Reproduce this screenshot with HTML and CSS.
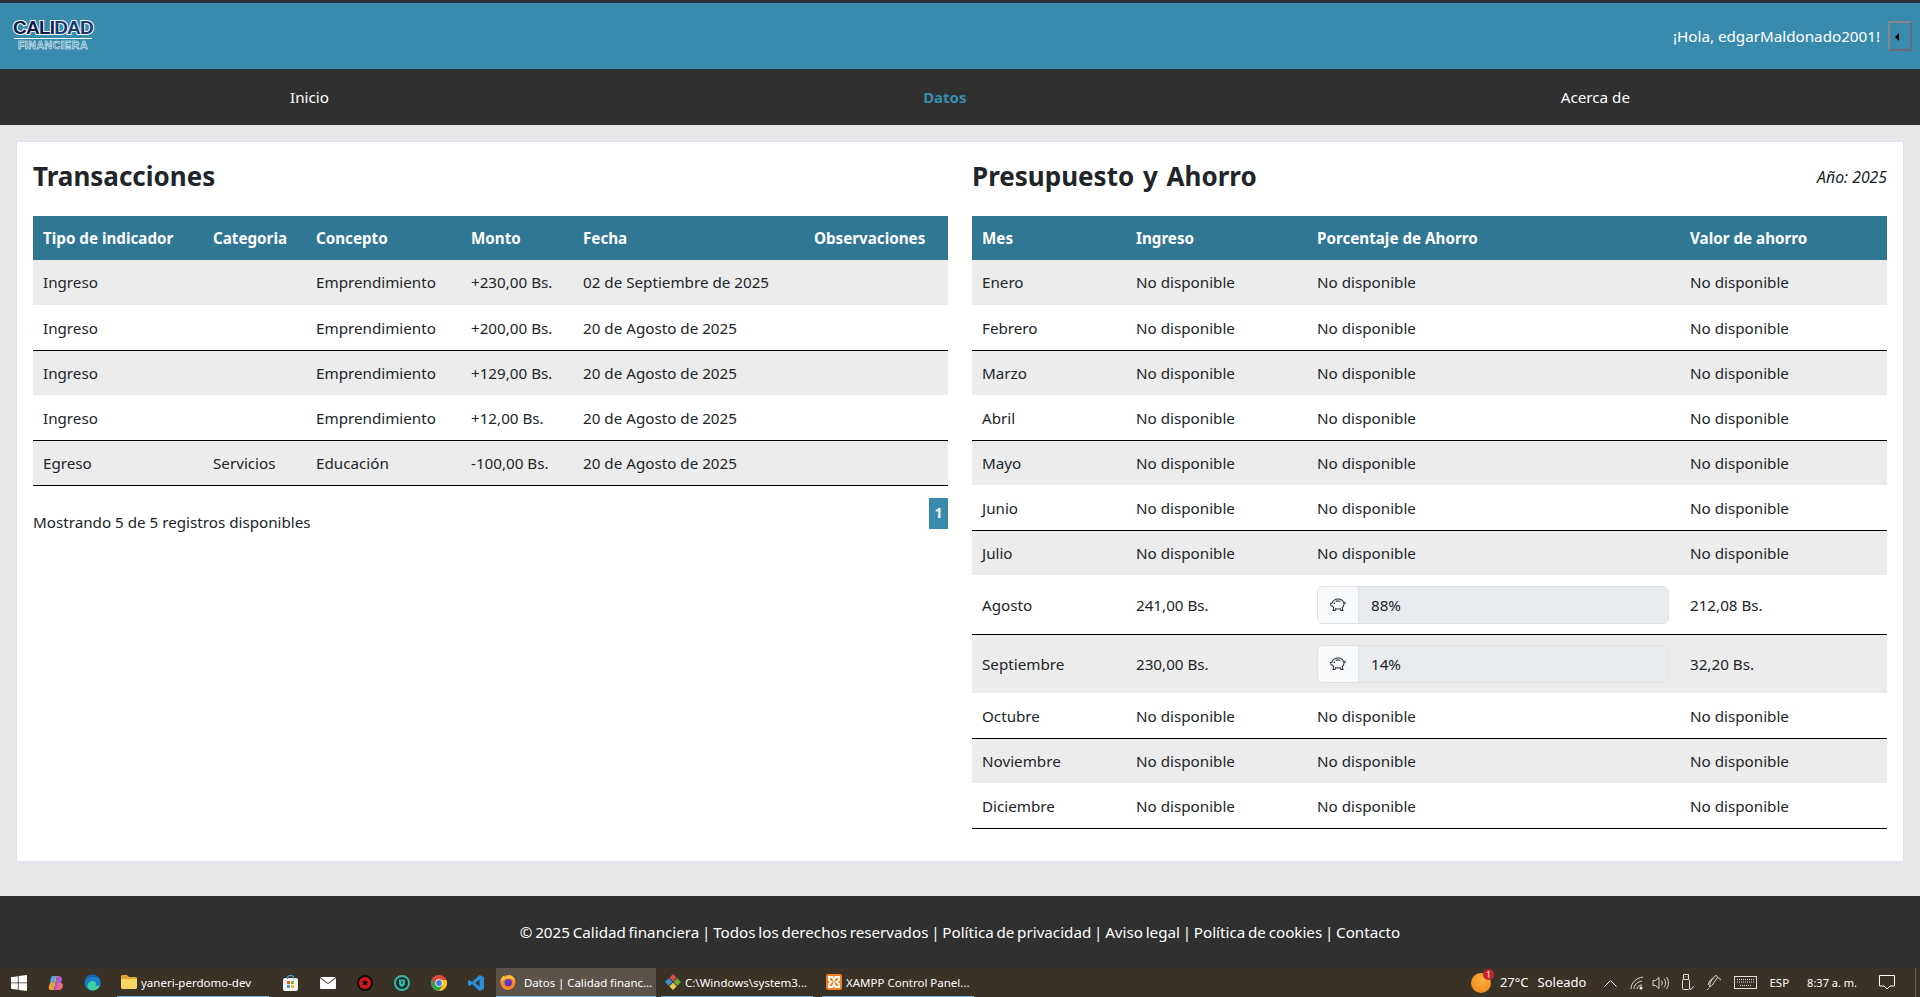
FILE: index.html
```html
<!DOCTYPE html>
<html lang="es">
<head>
<meta charset="utf-8">
<title>Datos | Calidad financiera</title>
<link rel="stylesheet" href="styles.css">
</head>
<body>
<svg class="defs" width="0" height="0" aria-hidden="true">
  <symbol id="piggy" viewBox="0 0 16 16">
    <path d="M5 6.25a.75.75 0 1 1-1.5 0 .75.75 0 0 1 1.5 0zm1.138-1.496A6.613 6.613 0 0 1 7.964 4.5c.666 0 1.303.097 1.893.273a.5.5 0 0 0 .286-.958A7.602 7.602 0 0 0 7.964 3.5c-.734 0-1.441.103-2.102.292a.5.5 0 1 0 .276.962z"/>
    <path fill-rule="evenodd" d="M7.964 1.527c-2.977 0-5.571 1.704-6.32 4.125h-.55A1 1 0 0 0 .11 6.824l.254 1.46a1.5 1.5 0 0 0 1.478 1.243h.263c.3.513.688.978 1.145 1.382l-.729 2.477a.5.5 0 0 0 .48.641h2a.5.5 0 0 0 .471-.332l.482-1.351c.635.173 1.31.267 2.011.267.707 0 1.388-.095 2.028-.272l.543 1.372a.5.5 0 0 0 .465.316h2a.5.5 0 0 0 .478-.645l-.761-2.506C13.81 9.895 14.5 8.559 14.5 7.069c0-.145-.007-.29-.02-.431.261-.11.508-.266.705-.444.315.306.815.306.815-.417 0 .223-.5.223-.461-.026a.95.95 0 0 0 .09-.255.7.7 0 0 0-.202-.645.58.58 0 0 0-.707-.098.735.735 0 0 0-.375.562c-.024.243.082.48.32.654a2.112 2.112 0 0 1-.259.153c-.534-2.664-3.284-4.595-6.442-4.595zM2.516 6.26c.455-2.066 2.667-3.733 5.448-3.733 3.146 0 5.536 2.114 5.536 4.542 0 1.254-.624 2.41-1.67 3.248a.5.5 0 0 0-.165.535l.66 2.175h-.985l-.59-1.487a.5.5 0 0 0-.629-.288c-.661.23-1.39.359-2.157.359a6.558 6.558 0 0 1-2.176-.367.5.5 0 0 0-.635.304l-.525 1.471h-.979l.633-2.15a.5.5 0 0 0-.17-.534 4.649 4.649 0 0 1-1.284-1.541.5.5 0 0 0-.446-.275h-.56a.5.5 0 0 1-.492-.414l-.254-1.46h.933a.5.5 0 0 0 .488-.393z"/>
  </symbol>
</svg>

<div class="topline"></div>
<header class="header">
  <a class="logo" href="#">
    <span class="logo-main"><span class="logo-cali">CALI</span><span class="logo-dad">DAD</span></span>
    <span class="logo-rule"></span>
    <span class="logo-sub">FINANCIERA</span>
  </a>
  <div class="user">
    <span class="user-name">¡Hola, edgarMaldonado2001!</span>
    <button class="user-btn" type="button"><span class="caret"></span></button>
  </div>
</header>
<nav class="nav">
  <a href="#">Inicio</a>
  <a href="#" class="active">Datos</a>
  <a href="#">Acerca de</a>
</nav>

<main class="card">
  <section class="panel">
    <div class="panel-head"><h2>Transacciones</h2></div>
    <table class="grid">
      <colgroup><col class="t1"><col class="t2"><col class="t3"><col class="t4"><col class="t5"><col class="t6"></colgroup>
      <thead><tr><th>Tipo de indicador</th><th>Categoria</th><th>Concepto</th><th>Monto</th><th>Fecha</th><th>Observaciones</th></tr></thead>
      <tbody>
        <tr><td>Ingreso</td><td></td><td>Emprendimiento</td><td>+230,00 Bs.</td><td>02 de Septiembre de 2025</td><td></td></tr>
        <tr><td>Ingreso</td><td></td><td>Emprendimiento</td><td>+200,00 Bs.</td><td>20 de Agosto de 2025</td><td></td></tr>
        <tr><td>Ingreso</td><td></td><td>Emprendimiento</td><td>+129,00 Bs.</td><td>20 de Agosto de 2025</td><td></td></tr>
        <tr><td>Ingreso</td><td></td><td>Emprendimiento</td><td>+12,00 Bs.</td><td>20 de Agosto de 2025</td><td></td></tr>
        <tr><td>Egreso</td><td>Servicios</td><td>Educación</td><td>-100,00 Bs.</td><td>20 de Agosto de 2025</td><td></td></tr>
      </tbody>
    </table>
    <div class="pager-row">
      <span class="pager-info">Mostrando 5 de 5 registros disponibles</span>
      <a class="pager-page" href="#">1</a>
    </div>
  </section>

  <section class="panel">
    <div class="panel-head"><h2 class="h2-wide">Presupuesto y Ahorro</h2><em class="year">Año: 2025</em></div>
    <table class="grid">
      <colgroup><col class="b1"><col class="b2"><col class="b3"><col class="b4"></colgroup>
      <thead><tr><th>Mes</th><th>Ingreso</th><th>Porcentaje de Ahorro</th><th>Valor de ahorro</th></tr></thead>
      <tbody>
        <tr><td>Enero</td><td>No disponible</td><td>No disponible</td><td>No disponible</td></tr>
        <tr><td>Febrero</td><td>No disponible</td><td>No disponible</td><td>No disponible</td></tr>
        <tr><td>Marzo</td><td>No disponible</td><td>No disponible</td><td>No disponible</td></tr>
        <tr><td>Abril</td><td>No disponible</td><td>No disponible</td><td>No disponible</td></tr>
        <tr><td>Mayo</td><td>No disponible</td><td>No disponible</td><td>No disponible</td></tr>
        <tr><td>Junio</td><td>No disponible</td><td>No disponible</td><td>No disponible</td></tr>
        <tr><td>Julio</td><td>No disponible</td><td>No disponible</td><td>No disponible</td></tr>
        <tr><td>Agosto</td><td>241,00 Bs.</td><td><div class="saving"><span class="saving-icon"><svg width="16" height="16"><use href="#piggy"/></svg></span><span class="saving-val">88%</span></div></td><td>212,08 Bs.</td></tr>
        <tr><td>Septiembre</td><td>230,00 Bs.</td><td><div class="saving"><span class="saving-icon"><svg width="16" height="16"><use href="#piggy"/></svg></span><span class="saving-val">14%</span></div></td><td>32,20 Bs.</td></tr>
        <tr><td>Octubre</td><td>No disponible</td><td>No disponible</td><td>No disponible</td></tr>
        <tr><td>Noviembre</td><td>No disponible</td><td>No disponible</td><td>No disponible</td></tr>
        <tr><td>Diciembre</td><td>No disponible</td><td>No disponible</td><td>No disponible</td></tr>
      </tbody>
    </table>
  </section>
</main>

<footer class="footer">© 2025 Calidad financiera | Todos los derechos reservados | Política de privacidad | Aviso legal | Política de cookies | Contacto</footer>

<div class="taskbar">
  <div class="tb-slot tb-start"><svg width="16" height="16" viewBox="0 0 16 16"><path fill="#fff" d="M0 2.2 6.8 1.2V7.5H0zM7.6 1.1 16 0V7.5H7.6zM0 8.3H6.8V14.8L0 13.8zM7.6 8.3H16V16L7.6 14.9z"/></svg></div>
  <div class="tb-slot"><svg width="16" height="16" viewBox="0 0 16 16"><path fill="#e8a33c" d="M5 1h4L6 15H3C1 15 0 13 1 11z"/><path fill="#b25ad0" d="M9 1h2c2 0 3 1 3 4l-4 9c-1 1-2 1-4 1z"/><path fill="#4fa3e8" d="M5 1C3 1 3 3 2 6l4 2 2-7z"/><path fill="#e86a8a" d="M15 9c0 3-1 6-4 6H8l3-8z"/></svg></div>
  <div class="tb-slot"><svg width="17" height="17" viewBox="0 0 17 17"><circle cx="8.500" cy="8.500" r="8" fill="#1a7fc9"/><path fill="#3ad0a0" d="M16.500 9c0 4-3.500 7.500-8 7.500-3 0-5-2-5-4.500 0-4 4-5 5-5s5 1 3 4.500c2 1 4.500.5 5-2.500z"/><path fill="#0d4f94" d="M.5 8.500C1 4 4.500.5 8.500.5c4 0 7 2.500 8 6-1-2-4-3.500-7-3.500-4 0-8 2-9 5.500z" opacity=".5"/></svg></div>
  <div class="tb-app tb-folder">
    <svg width="16" height="14" viewBox="0 0 16 14"><path fill="#e0a92e" d="M0 1.500C0 .7.700 0 1.500 0H6l2 2h6.500c.8 0 1.500.7 1.500 1.500V5H0z"/><path fill="#f7d560" d="M0 4h16v8.500c0 .8-.7 1.500-1.500 1.500h-13C.7 14 0 13.300 0 12.500z"/></svg>
    <span>yaneri-perdomo-dev</span>
  </div>
  <div class="tb-slot"><svg width="15" height="16" viewBox="0 0 15 16"><rect y="3" width="15" height="13" rx="2" fill="#f2f2f2"/><path fill="none" stroke="#3aa0e8" stroke-width="1.200" d="M4.500 4V2.500a3 2 0 0 1 6 0V4"/><rect x="4" y="6" width="3" height="3" fill="#e8532c"/><rect x="8" y="6" width="3" height="3" fill="#7ab82c"/><rect x="4" y="10" width="3" height="3" fill="#2c9ae8"/><rect x="8" y="10" width="3" height="3" fill="#f5b82c"/></svg></div>
  <div class="tb-slot"><svg width="16" height="12" viewBox="0 0 16 12"><path fill="#fff" d="M0 1.200 8 7l8-5.800V11a1 1 0 0 1-1 1H1a1 1 0 0 1-1-1z"/><path fill="#fff" d="M1 0h14l.5.500L8 6 .5.500z"/></svg></div>
  <div class="tb-slot"><svg width="16" height="16" viewBox="0 0 16 16"><circle cx="8" cy="8" r="8" fill="#0e0e0e"/><circle cx="8" cy="8" r="6" fill="#d8161e"/><path fill="#0e0e0e" d="M8 4.500 9 6.500l2.200.1L9.800 8.300l.7 2.200L8 9.400 5.500 10.500l.7-2.200L4.800 6.600 7 6.500z"/></svg></div>
  <div class="tb-slot"><svg width="16" height="16" viewBox="0 0 16 16"><circle cx="8" cy="8" r="7" fill="#132a2a" stroke="#37b8a8" stroke-width="2"/><path fill="#37b8a8" d="M5 4.500h6v4c0 2-1.500 3-3 3.500-1.500-.5-3-1.500-3-3.500z"/><rect x="7.400" y="6" width="1.200" height="3" fill="#1a2a28"/></svg></div>
  <div class="tb-slot"><svg width="16" height="16" viewBox="0 0 16 16"><circle cx="8" cy="8" r="8" fill="#dd4b3c"/><path fill="#f5c518" d="M8 16A8 8 0 0 0 15.500 5H8l3.500 5z"/><path fill="#2fa24f" d="M.9 4.200A8 8 0 0 0 8 16l3.500-6L8 11 4.500 10z"/><circle cx="8" cy="8" r="3.700" fill="#fff"/><circle cx="8" cy="8" r="2.900" fill="#3b7ee8"/></svg></div>
  <div class="tb-slot"><svg width="16" height="16" viewBox="0 0 16 16"><path fill="#2a8fd8" d="M11.500 0 16 2v12l-4.500 2L4 9l-2.500 2L0 10V6l1.500-1L4 7zM11.500 4.500 7.300 8l4.200 3.500z"/></svg></div>
  <div class="tb-app tb-browser">
    <svg width="16" height="16" viewBox="0 0 16 16"><circle cx="8" cy="8.500" r="7.500" fill="#f58a1f"/><path fill="#ffc33a" d="M.5 8C.5 5 2 3 4 1.500 4 3 4.500 3.500 5.500 3.500 7 1.500 9 .5 11 1.500 13 2 15 4 15.500 8 13 4.500 10 4 8 4.800 5 5 3 5.500.5 8z"/><circle cx="8.300" cy="8.700" r="3.800" fill="#7a2bbf"/><circle cx="7.200" cy="8.300" r="1.900" fill="#3a4fd0"/></svg>
    <span>Datos | Calidad financ...</span>
  </div>
  <div class="tb-app tb-cmd">
    <svg width="16" height="16" viewBox="0 0 16 16"><path fill="#c94f4f" d="M8 0l3.700 3.700L8 7.400 4.300 3.700z"/><path fill="#6fae35" d="M12.300 4.300 16 8l-3.700 3.700L8.600 8z"/><path fill="#3d8fd6" d="M3.700 4.300 7.400 8l-3.700 3.700L0 8z"/><path fill="#e8c84a" d="M8 8.600l3.700 3.700L8 16l-3.700-3.700z"/></svg>
    <span>C:\Windows\system3...</span>
  </div>
  <div class="tb-app tb-xampp">
    <svg width="16" height="16" viewBox="0 0 16 16"><rect width="16" height="16" rx="2" fill="#f47c20"/><path fill="none" stroke="#fff" stroke-width="1.800" d="M3 3h3.500L8 6.500 9.500 3H13v3l-2.500 2 2.500 2v3H9.500L8 9.500 6.500 13H3v-3l2.500-2L3 6z"/></svg>
    <span>XAMPP Control Panel...</span>
  </div>

  <div class="tray">
    <div class="weather">
      <span class="weather-sun"><span class="weather-badge">1</span></span>
      <span class="weather-temp">27°C</span><span class="weather-txt">Soleado</span>
    </div>
    <svg class="ti ti-chev" width="13" height="8" viewBox="0 0 13 8"><path fill="none" stroke="#fff" d="M.5 7.500 6.500 1.500 12.500 7.500"/></svg>
    <svg class="ti ti-wifi" width="14" height="14" viewBox="0 0 14 14"><g fill="none" stroke="#ddd"><path d="M1 13C1 7 6 2 13 1"/><path d="M4 13c0-4 3-7 8-8"/><path d="M7 13c0-2 2-4 5-4"/></g><circle cx="11" cy="12" r="1.500" fill="#fff"/></svg>
    <svg class="ti ti-vol" width="17" height="14" viewBox="0 0 17 14"><g fill="none" stroke="#ddd"><path d="M1 4.500h2.500L7 1.500v11L3.500 9.500H1z"/><path d="M9.500 4.500c1 1.500 1 3.500 0 5"/><path d="M12 2.500c2 2.500 2 6.500 0 9"/><path d="M14.500 1c2.500 3.500 2.500 8.500 0 12"/></g></svg>
    <svg class="ti ti-usb" width="14" height="17" viewBox="0 0 14 17"><g fill="none" stroke="#ddd"><rect x="2.500" y="5.500" width="7" height="10" rx="1"/><path d="M3.500 5.500v-5h5v5M5 2.500h.5M7 2.500h.5M9 14l2 1.500 2.500-3"/></g></svg>
    <svg class="ti ti-pen" width="16" height="16" viewBox="0 0 16 16"><g fill="none" stroke="#ddd"><path d="M5 6 9 1c1-1 3 0 2.500 1.500L7 9c-1 1.500-2.500 2.500-3.500 3C4 10 4 8 5 6z"/><path d="M12 3c2 0 3 1 2 2.500M3 13c-1 1-2.500 2.500-2 2"/><path d="M7 3c-2 1-4 4-5 7"/></g></svg>
    <svg class="ti ti-kbd" width="23" height="13" viewBox="0 0 23 13"><g fill="none" stroke="#ddd"><rect x=".5" y=".5" width="22" height="12"/><path stroke-dasharray="1 1" d="M3 3.500h17M3 6h17M6 9.500h11"/></g></svg>
    <span class="tray-lang">ESP</span>
    <span class="tray-time">8:37 a. m.</span>
    <svg class="ti ti-note" width="16" height="15" viewBox="0 0 16 15"><path fill="none" stroke="#fff" d="M.5.500h15v10.500h-4.500l-3 3-3-3H.5z"/></svg>
    <span class="tray-edge"></span>
  </div>
</div>
</body>
</html>
```
FILE: styles.css
```css
* { box-sizing: border-box; }
html, body { margin: 0; padding: 0; }
body {
  background: #e7e7e7;
  color: #212529;
  font-family: "Noto Sans", "Open Sans", sans-serif;
  font-size: 15.2px;
  line-height: 24px;
  height: 997px;
  overflow: hidden;
}
a { color: inherit; text-decoration: none; }
.defs { display: block; height: 0; }
.topline { height: 3px; background: #2c2f33; }

.header {
  height: 66px;
  background: #388bad;
  display: flex;
  align-items: center;
  justify-content: space-between;
  padding: 0 8px 0 12px;
}
.logo { display: flex; flex-direction: column; align-items: center; width: 82px; margin-bottom: 1px; }
.logo-main {
  font-family: "Liberation Sans", sans-serif;
  font-size: 19px;
  font-weight: 700;
  line-height: 16px;
  letter-spacing: -.8px;
  color: #0d1c4a;
  -webkit-text-stroke: 2px #fff;
  paint-order: stroke fill;
  white-space: nowrap;
}
.logo-dad { color: #163a72; }
.logo-rule { width: 78px; height: 1px; background: #fff; margin-top: 2px; }
.logo-sub {
  font-family: "Liberation Sans", sans-serif;
  font-size: 10.500px;
  font-weight: 700;
  line-height: 12px;
  letter-spacing: .55px;
  color: #388bad;
  -webkit-text-stroke: .5px #fff;
  white-space: nowrap;
}
.user { display: flex; align-items: center; gap: 8px; }
.user-name { color: #fff; font-size: 15.200px; }
.user-btn {
  width: 24px; height: 30px; padding: 0;
  background: #388bad;
  border: 2px solid;
  border-color: #85858f #696977 #696977 #85858f;
  display: flex; align-items: center; justify-content: center;
}
.caret {
  width: 0; height: 0;
  border-top: 4px solid transparent;
  border-bottom: 4px solid transparent;
  border-right: 4px solid #000;
  margin-right: 6px;
  margin-top: 2px;
}

.nav {
  height: 56px;
  background: #303030;
  display: flex;
  align-items: center;
  justify-content: space-between;
  padding: 0 290px;
  color: #fff;
}
.nav .active { color: #388bad; font-weight: 700; font-size: 15px; }

.card {
  margin: 16px 16px 0;
  height: 721px;
  background: #fff;
  border: 1px solid #ead9fb;
  padding: 0 16px;
  display: grid;
  grid-template-columns: 915px 915px;
  column-gap: 24px;
}
.panel-head {
  height: 74px;
  display: flex;
  align-items: flex-start;
  justify-content: space-between;
  padding-top: 17px;
}
h2 { margin: 0; font-size: 26px; line-height: 34px; font-weight: 700; color: #212529; }
.h2-wide { word-spacing: 2px; }
.year { font-size: 15.800px; color: #212529; margin-top: 6px; }

.grid { width: 915px; border-collapse: collapse; table-layout: fixed; }
.t1 { width: 170px; } .t2 { width: 103px; } .t3 { width: 155px; }
.t4 { width: 112px; } .t5 { width: 231px; } .t6 { width: 144px; }
.b1 { width: 154px; } .b2 { width: 181px; } .b3 { width: 373px; } .b4 { width: 207px; }
.grid th {
  height: 44px;
  background: #2f7793;
  color: #fff;
  font-size: 15.200px;
  font-weight: 700;
  text-align: left;
  padding: 0 10px;
  white-space: nowrap;
}
.grid td {
  height: 45px;
  padding: 10px;
  border-bottom: 1px solid transparent;
  color: #212529;
  white-space: nowrap;
}
.grid tbody tr:nth-child(odd) td { background: #ececec; }
.grid tbody tr:nth-child(even) td,
.grid tbody tr:last-child td { border-bottom-color: #000; }

.saving {
  display: flex;
  height: 38px;
  width: 352px;
  border-radius: 6px;
  overflow: hidden;
  border: 1px solid #dee2e6;
}
.saving-icon {
  width: 41px;
  background: #f8f9fa;
  border-right: 1px solid #dee2e6;
  display: flex; align-items: center; justify-content: center;
  color: #212529;
}
.saving-icon svg { fill: currentColor; }
.saving-val {
  flex: 1;
  background: #e9ecef;
  padding-left: 12px;
  line-height: 36px;
}

.pager-row {
  display: flex;
  justify-content: space-between;
  padding-top: 12px;
}
.pager-info { padding-top: 12px; }
.pager-page {
  width: 19px; height: 31px;
  background: #388bad;
  color: #fff;
  font-weight: 700;
  font-size: 14px;
  display: flex; align-items: center; justify-content: center;
}

.footer {
  margin-top: 34px;
  height: 72px;
  background: #303030;
  color: #fff;
  display: flex; align-items: center; justify-content: center;
  word-spacing: -1.200px;
}

.taskbar {
  height: 29px;
  background: #3a3127;
  display: flex;
  color: #fff;
  font-size: 11.500px;
  line-height: 29px;
}
.tb-slot { width: 37px; height: 29px; display: flex; align-items: center; justify-content: center; }
.tb-start { width: 37px; }
.tb-app {
  width: 152px; height: 29px;
  display: flex; align-items: center; gap: 4px;
  padding: 0 4px;
  border-bottom: 1px solid #76b9ed;
  white-space: nowrap;
}
.tb-folder { margin: 0 3px 0 6px; }
.tb-browser { width: 160px; margin-left: 2px; background: #5b534a; gap: 8px; letter-spacing: -.05px; }
.tb-cmd { margin-left: 5px; }
.tb-xampp { margin-left: 9px; }
.tray { margin-left: auto; display: flex; align-items: center; }
.weather { display: flex; align-items: center; font-size: 13px; }
.weather-sun {
  width: 20px; height: 20px; border-radius: 50%;
  background: radial-gradient(circle at 60% 30%, #fbb03b, #f0801a);
  position: relative;
  margin-right: 9px;
}
.weather-badge {
  position: absolute; top: -4px; right: -3px;
  width: 11px; height: 11px; border-radius: 50%;
  background: #c8262b; color: #fff;
  font-size: 8px; line-height: 11px; text-align: center;
}
.weather-temp { margin-right: 9px; }
.ti-chev { margin-left: 18px; }
.ti-wifi { margin-left: 13px; }
.ti-vol { margin-left: 8px; }
.ti-usb { margin-left: 11px; }
.ti-pen { margin-left: 12px; }
.ti-kbd { margin-left: 12px; }
.tray-lang { margin-left: 12px; font-size: 11.500px; }
.tray-time { margin-left: 18px; font-size: 11px; }
.ti-note { margin-left: 22px; }
.tray-edge { width: 1px; height: 29px; background: #6a6259; margin-left: 20px; margin-right: 4px; }
```
